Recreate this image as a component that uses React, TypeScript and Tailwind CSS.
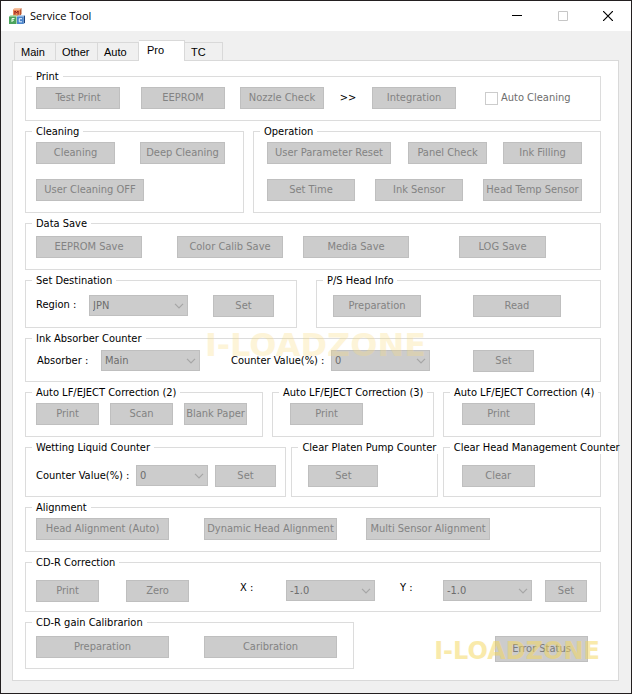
import type { ReactNode } from 'react'

interface groupProps {
  title: string
  children: ReactNode
  className?: string
}

function Group({ title, children, className = '' }: groupProps) {
  return (
    <fieldset className={`min-w-0 border border-[#dcdcdc] px-1.5 ${className}`}>
      <legend className="w-max whitespace-nowrap px-1 leading-[13px] text-black">{title}</legend>
      {children}
    </fieldset>
  )
}

interface buttonProps {
  label: string
  className: string
}

function ToolButton({ label, className }: buttonProps) {
  return (
    <button
      type="button"
      disabled
      className={`h-[22px] shrink-0 whitespace-nowrap border border-[#bfbfbf] bg-[#cccccc] text-center leading-5 text-[#838383] ${className}`}
    >
      {label}
    </button>
  )
}

interface selectProps {
  id: string
  value: string
  className: string
}

function ToolSelect({ id, value, className }: selectProps) {
  return (
    <div className={`relative shrink-0 ${className}`}>
      <select
        id={id}
        disabled
        defaultValue={value}
        className="block h-[21px] w-full appearance-none border border-[#bfbfbf] bg-[#cccccc] pl-[3px] leading-[19px] text-[#6d6d6d] opacity-100"
      >
        <option>{value}</option>
      </select>
      <svg className="pointer-events-none absolute right-1 top-2 h-1.5 w-2.5" viewBox="0 0 10 6" fill="none">
        <path d="M1 0.8L5 4.8L9 0.8" stroke="#a6a6a6" strokeWidth="1.2" />
      </svg>
    </div>
  )
}

function AppIcon() {
  return (
    <svg className="h-4 w-4" viewBox="0 0 16 16">
      <path d="M4 1.5L5.5 0H12.5L11 1.5Z" fill="#f6c3a0" />
      <path d="M11 1.5L12.5 0V6L11 8Z" fill="#b9542c" />
      <rect x="4" y="1.5" width="7" height="6.5" fill="#ec8a58" />
      <path d="M5.9 6.5V3L7.5 4.8L9.1 3V6.5" stroke="#8e1a1a" strokeWidth="1" fill="none" />
      <path d="M0 8.5L1.5 7.2H8L7.5 8.5Z" fill="#a4dba0" />
      <rect x="0" y="8.5" width="7.5" height="7.5" fill="#4ba35c" />
      <path d="M3 14V10.5H5.5M3 12.2H5" stroke="#e8ffe8" strokeWidth="1" fill="none" />
      <path d="M8 8.5L9 7.2H16L14.7 8.5Z" fill="#a5c8ec" />
      <path d="M14.7 8.5L16 7.2V14.5L14.7 16Z" fill="#1d3f78" />
      <rect x="8" y="8.5" width="6.7" height="7.5" fill="#4b86cc" />
      <path d="M13 10.7H10.3V13.8H13" stroke="#e8f2ff" strokeWidth="1" fill="none" />
    </svg>
  )
}

function TitleBar() {
  return (
    <header className="flex h-[30px] items-center bg-white pl-2">
      <AppIcon />
      <h1 className="ml-[5px] font-['Open_Sans',sans-serif] text-[11px] leading-4 text-black">Service Tool</h1>
      <div className="ml-auto flex items-center">
        <button type="button" aria-label="Minimize" className="flex h-[29px] w-[46px] items-center justify-center">
          <svg className="h-2.5 w-2.5" viewBox="0 0 10 10">
            <path d="M0 4.5H10" stroke="#000" />
          </svg>
        </button>
        <button type="button" aria-label="Maximize" disabled className="flex h-[29px] w-[45px] items-center justify-center">
          <svg className="h-2.5 w-2.5" viewBox="0 0 10 10">
            <path d="M0.5 0.5H9.5V9.5H0.5Z" stroke="#c6c6c6" fill="none" />
          </svg>
        </button>
        <button type="button" aria-label="Close" className="flex h-[29px] w-[46px] items-center justify-center">
          <svg className="h-2.5 w-2.5" viewBox="0 0 10 10">
            <path d="M0 0L10 10M10 0L0 10" stroke="#000" strokeWidth="1.2" />
          </svg>
        </button>
      </div>
    </header>
  )
}

function Tabs() {
  const tab = 'h-[18px] border-t border-r border-[#d9d9d9] pl-1.5 text-left leading-[18px]'
  return (
    <div role="tablist" className="ml-[13px] flex items-end font-['Liberation_Sans',sans-serif] text-[11px] text-black">
      <button type="button" role="tab" className={`${tab} w-[42px] border-l`}>Main</button>
      <button type="button" role="tab" className={`${tab} w-[42px]`}>Other</button>
      <button type="button" role="tab" className={`${tab} w-[41px]`}>Auto</button>
      <button
        type="button"
        role="tab"
        aria-selected="true"
        className="z-10 -mb-px h-[21px] w-[46px] border-t border-r border-[#d9d9d9] bg-white pb-0.5 pl-2 text-left leading-[18px]"
      >
        Pro
      </button>
      <button type="button" role="tab" className={`${tab} w-[38px]`}>TC</button>
    </div>
  )
}

export default function App() {
  return (
    <div className="border border-[#231f20] bg-[#f0f0f0] pb-3 font-['DejaVu_Sans_Condensed','DejaVu_Sans',sans-serif] text-[11px]">
      <TitleBar />
      <div className="pt-[9px]">
        <Tabs />
      </div>
      <main className="relative ml-[11px] mr-3 flex flex-col gap-1 border border-[#d9d9d9] bg-white pb-[11px] pl-3 pr-[17px] pt-[9px]">
        <Group title="Print">
          <div className="flex items-center pb-[11px] pl-1 pt-1">
            <ToolButton label="Test Print" className="w-[84px]" />
            <ToolButton label="EEPROM" className="ml-[21px] w-[84px]" />
            <ToolButton label="Nozzle Check" className="ml-[15px] w-[84px]" />
            <span className="w-12 text-center text-black">&gt;&gt;</span>
            <ToolButton label="Integration" className="w-[84px]" />
            <label className="ml-[29px] flex items-center gap-[3px] whitespace-nowrap text-[#6d6d6d]">
              <input type="checkbox" disabled className="h-[13px] w-[13px] appearance-none border border-[#cccccc] bg-white" />
              Auto Cleaning
            </label>
          </div>
        </Group>

        <div className="grid grid-cols-[219fr_348fr] gap-[9px]">
          <Group title="Cleaning">
            <div className="flex flex-col gap-[15px] pb-[11px] pl-1 pt-1">
              <div className="flex">
                <ToolButton label="Cleaning" className="w-[79px]" />
                <ToolButton label="Deep Cleaning" className="ml-[25px] w-[85px]" />
              </div>
              <ToolButton label="User Cleaning OFF" className="w-[108px]" />
            </div>
          </Group>
          <Group title="Operation">
            <div className="flex flex-col gap-[15px] pb-[11px] pl-[7px] pt-1">
              <div className="flex">
                <ToolButton label="User Parameter Reset" className="w-[124px]" />
                <ToolButton label="Panel Check" className="ml-[17px] w-[79px]" />
                <ToolButton label="Ink Filling" className="ml-4 w-[79px]" />
              </div>
              <div className="flex gap-5">
                <ToolButton label="Set Time" className="w-[88px]" />
                <ToolButton label="Ink Sensor" className="w-[88px]" />
                <ToolButton label="Head Temp Sensor" className="w-[99px]" />
              </div>
            </div>
          </Group>
        </div>

        <Group title="Data Save">
          <div className="flex pb-[11px] pl-1 pt-1.5">
            <ToolButton label="EEPROM Save" className="w-[106px]" />
            <ToolButton label="Color Calib Save" className="ml-[35px] w-[106px]" />
            <ToolButton label="Media Save" className="ml-5 w-[106px]" />
            <ToolButton label="LOG Save" className="ml-[50px] w-[87px]" />
          </div>
        </Group>

        <div className="grid grid-cols-[272fr_285fr] gap-[19px]">
          <Group title="Set Destination">
            <div className="flex pb-2.5 pl-1 pt-2">
              <label htmlFor="region" className="w-[53px] whitespace-nowrap leading-5 text-black">Region :</label>
              <ToolSelect id="region" value="JPN" className="w-[99px]" />
              <ToolButton label="Set" className="ml-[25px] w-[61px]" />
            </div>
          </Group>
          <Group title="P/S Head Info">
            <div className="flex pb-2.5 pl-2.5 pt-2">
              <ToolButton label="Preparation" className="w-[88px]" />
              <ToolButton label="Read" className="ml-[52px] w-[88px]" />
            </div>
          </Group>
        </div>

        <Group title="Ink Absorber Counter">
          <div className="flex pb-[9px] pl-[5px] pt-[5px]">
            <label htmlFor="absorber" className="w-16 whitespace-nowrap leading-[22px] text-black">Absorber :</label>
            <ToolSelect id="absorber" value="Main" className="w-[99px]" />
            <label htmlFor="absorber-value" className="ml-[31px] w-[100px] whitespace-nowrap leading-[22px] text-black">
              Counter Value(%) :
            </label>
            <ToolSelect id="absorber-value" value="0" className="w-[99px]" />
            <ToolButton label="Set" className="ml-[43px] w-[61px]" />
          </div>
        </Group>

        <div className="grid grid-cols-[238fr_162fr_158fr] gap-[9px]">
          <Group title="Auto LF/EJECT Correction (2)">
            <div className="flex gap-[11px] pb-[11px] pl-1 pt-1">
              <ToolButton label="Print" className="w-[63px]" />
              <ToolButton label="Scan" className="w-[63px]" />
              <ToolButton label="Blank Paper" className="w-[63px]" />
            </div>
          </Group>
          <Group title="Auto LF/EJECT Correction (3)">
            <div className="flex pb-[11px] pl-[11px] pt-1">
              <ToolButton label="Print" className="w-[73px]" />
            </div>
          </Group>
          <Group title="Auto LF/EJECT Correction (4)">
            <div className="flex pb-[11px] pl-3 pt-1">
              <ToolButton label="Print" className="w-[73px]" />
            </div>
          </Group>
        </div>

        <div className="grid grid-cols-[261fr_146fr_158fr] gap-[5px]">
          <Group title="Wetting Liquid Counter">
            <div className="flex pb-[9px] pl-1 pt-[11px]">
              <label htmlFor="wetting-value" className="w-[100px] whitespace-nowrap leading-[22px] text-black">
                Counter Value(%) :
              </label>
              <ToolSelect id="wetting-value" value="0" className="w-[72px]" />
              <ToolButton label="Set" className="ml-[7px] w-[61px]" />
            </div>
          </Group>
          <Group title="Clear Platen Pump Counter">
            <div className="flex pb-[9px] pl-2.5 pt-[11px]">
              <ToolButton label="Set" className="w-[70px]" />
            </div>
          </Group>
          <Group title="Clear Head Management Counter">
            <div className="flex pb-[9px] pl-3 pt-[11px]">
              <ToolButton label="Clear" className="w-[73px]" />
            </div>
          </Group>
        </div>

        <Group title="Alignment">
          <div className="flex pb-[11px] pl-1 pt-1">
            <ToolButton label="Head Alignment (Auto)" className="w-[133px]" />
            <ToolButton label="Dynamic Head Alignment" className="ml-[35px] w-[133px]" />
            <ToolButton label="Multi Sensor Alignment" className="ml-[29px] w-[124px]" />
          </div>
        </Group>

        <Group title="CD-R Correction">
          <div className="flex pb-[9px] pl-1 pt-[11px]">
            <ToolButton label="Print" className="w-[63px]" />
            <ToolButton label="Zero" className="ml-[27px] w-[63px]" />
            <label htmlFor="cdr-x" className="ml-[51px] w-[46px] leading-4 text-black">X :</label>
            <ToolSelect id="cdr-x" value="-1.0" className="w-[89px]" />
            <label htmlFor="cdr-y" className="ml-[25px] w-[43px] leading-4 text-black">Y :</label>
            <ToolSelect id="cdr-y" value="-1.0" className="w-[89px]" />
            <ToolButton label="Set" className="ml-[13px] w-[42px]" />
          </div>
        </Group>

        <div className="flex items-end justify-between">
          <Group title="CD-R gain Calibrarion" className="w-[329px]">
            <div className="flex gap-[35px] pb-2.5 pl-1 pt-[7px]">
              <ToolButton label="Preparation" className="w-[133px]" />
              <ToolButton label="Caribration" className="w-[133px]" />
            </div>
          </Group>
          <div className="relative mb-[7px] mr-[13px]">
            <button
              type="button"
              disabled
              className="block h-[26px] w-[93px] border border-[#bfbfbf] bg-[#cccccc] text-[#7a7a7a]"
            >
              Error Status
            </button>
            <span className="pointer-events-none absolute -right-3 top-0.5 whitespace-nowrap font-['DejaVu_Sans',sans-serif] text-[24px] font-bold leading-[26px] text-[#f5d65a] opacity-50">
              I-LOADZONE
            </span>
          </div>
        </div>

        <span className="pointer-events-none absolute inset-x-0 top-[268px] text-center font-['DejaVu_Sans',sans-serif] text-[32px] font-bold leading-8 text-[#f9dc80] opacity-30">
          I-LOADZONE
        </span>
      </main>
    </div>
  )
}
